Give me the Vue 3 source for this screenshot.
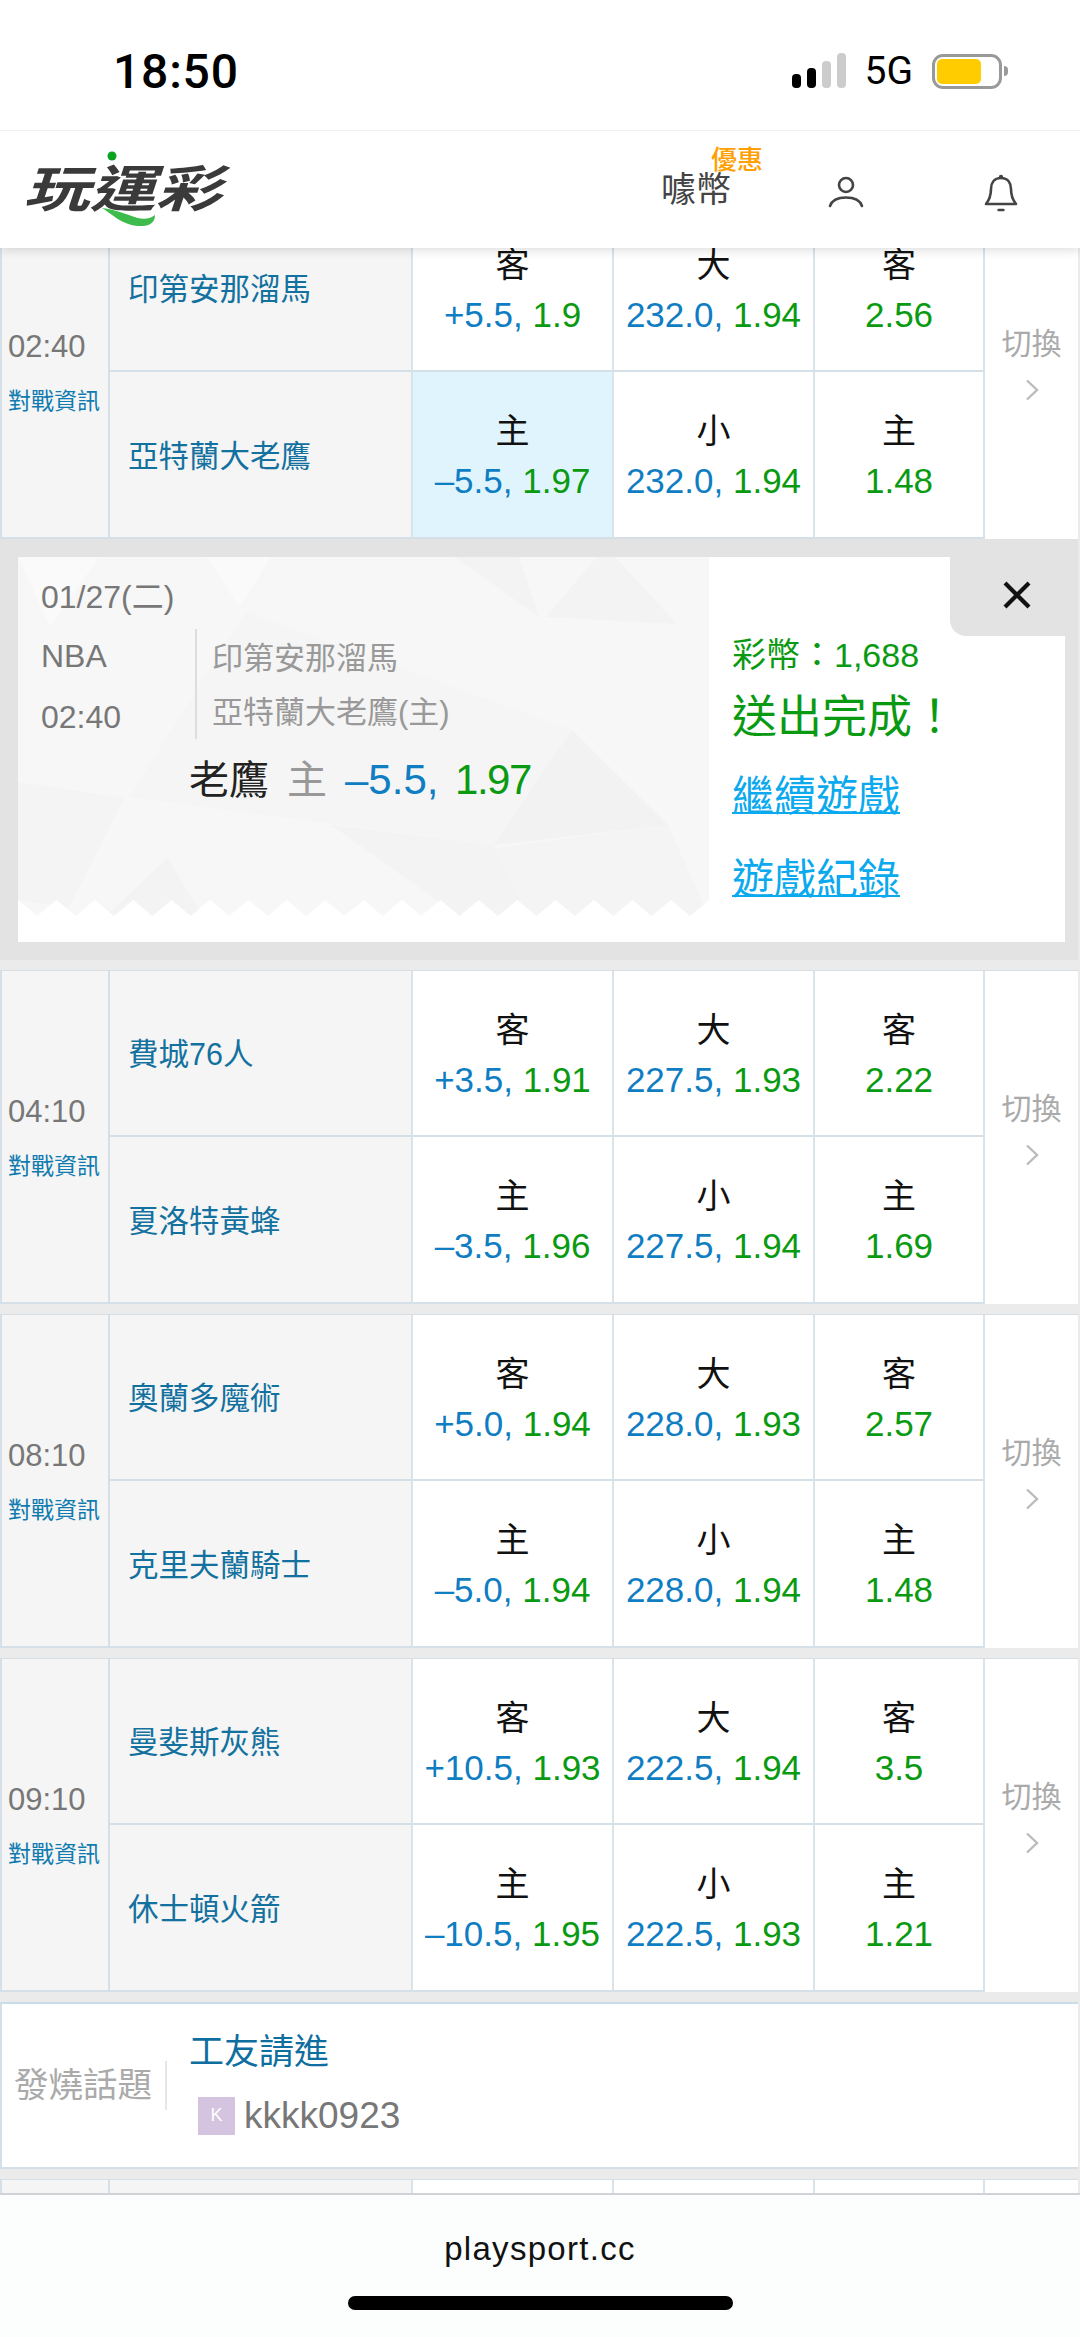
<template>
  <div class="phone">
    <header class="top">
      <div class="status">
        <span class="status__time">18:50</span>
        <div class="status__right">
          <svg class="status__signal" width="54" height="36" viewBox="0 0 54 36" aria-hidden="true">
            <rect x="0" y="21" width="9" height="14" rx="4" fill="#000" />
            <rect x="15" y="15" width="9" height="20" rx="4" fill="#000" />
            <rect x="30" y="8" width="9" height="27" rx="4" fill="#ccc" />
            <rect x="45" y="0" width="9" height="35" rx="4" fill="#ccc" />
          </svg>
          <span class="status__net">5G</span>
          <div class="battery">
            <span class="battery__level"></span>
          </div>
        </div>
      </div>
      <nav class="nav">
        <a class="logo">
          <span class="logo__text">玩運彩</span>
          <svg class="logo__mark" width="80" height="80" viewBox="0 0 80 80" aria-hidden="true">
            <circle cx="34" cy="8" r="4.5" fill="#0aa31e" />
            <path d="M24 60c10 6 20 17 36 18 10 .6 17-2 17-11-8 6-16 4-26 0-9-3-18-6-27-7z" fill="#3dbb4c" />
          </svg>
        </a>
        <div class="nav__right">
          <a class="nav__coin">
            <span class="nav__promo">優惠</span>
            噱幣
          </a>
          <svg class="nav__icon nav__user" width="36" height="32" viewBox="0 0 36 32" fill="none" stroke="#444" stroke-width="2.6" aria-hidden="true">
            <circle cx="18" cy="9" r="7" />
            <path d="M2 30c2-6 8-8.500 16-8.500S32 24 34 30" stroke-linecap="round" />
          </svg>
          <svg class="nav__icon nav__bell" width="36" height="38" viewBox="0 0 36 38" fill="none" stroke="#444" stroke-width="2.6" aria-hidden="true">
            <path d="M18 4c-7 0-10 5-10 11 0 6-1 10-5 15h30c-4-5-5-9-5-15 0-6-3-11-10-11z" stroke-linejoin="round" />
            <circle cx="18" cy="3" r="1.4" fill="#444" stroke-width="1.5" />
            <path d="M15.500 36h5" stroke-width="2.4" stroke-linecap="round" />
          </svg>
        </div>
      </nav>
    </header>

    <main class="scroller">
      <div class="list">
        <template v-for="(m, i) in matches" :key="i">
          <section class="match">
            <div class="match__time">
              <span class="match__clock">{{ m.time }}</span>
              <a class="match__info">對戰資訊</a>
            </div>
            <template v-for="(row, r) in m.rows" :key="r">
              <div class="team">{{ row.team }}</div>
              <div class="odds" :class="{ 'is-picked': row.picked }">
                <span class="odds__label">{{ r === 0 ? '客' : '主' }}</span>
                <span class="odds__value"><em class="blue">{{ row.spread }},</em> <em class="green">{{ row.spreadOdds }}</em></span>
              </div>
              <div class="odds">
                <span class="odds__label">{{ r === 0 ? '大' : '小' }}</span>
                <span class="odds__value"><em class="blue">{{ row.total }},</em> <em class="green">{{ row.totalOdds }}</em></span>
              </div>
              <div class="odds">
                <span class="odds__label">{{ r === 0 ? '客' : '主' }}</span>
                <span class="odds__value"><em class="green">{{ row.win }}</em></span>
              </div>
              <div v-if="r === 0" class="switch">
                <span>切換</span>
                <svg width="14" height="22" viewBox="0 0 14 22" fill="none" stroke="#bbb" stroke-width="2.4" aria-hidden="true">
                  <path d="M2 1.500 12 11 2 20.500" />
                </svg>
              </div>
            </template>
          </section>

          <section v-if="i === 0" class="result">
            <div class="ticket">
              <div class="ticket__left">
                <svg class="ticket__bg" width="691" height="359" viewBox="0 0 691 359" aria-hidden="true">
                  <polygon v-for="(p, k) in shards" :key="k" :points="p.points" :fill="p.fill" />
                  <polygon :points="teeth" fill="#fff" />
                </svg>
                <div class="ticket__date">01/27(二)</div>
                <div class="ticket__game">
                  <div class="ticket__meta">
                    <span>NBA</span>
                    <span>02:40</span>
                  </div>
                  <div class="ticket__teams">
                    <span>印第安那溜馬</span>
                    <span>亞特蘭大老鷹(主)</span>
                  </div>
                </div>
                <div class="ticket__pick">
                  <span class="ticket__name">老鷹</span>
                  <span class="ticket__side">主</span>
                  <span class="ticket__odds"><em class="blue">–5.5,</em> <em class="green">1.97</em></span>
                </div>
              </div>
              <div class="ticket__right">
                <div class="ticket__coins">彩幣：1,688</div>
                <div class="ticket__done">送出完成！</div>
                <a class="ticket__link">繼續遊戲</a>
                <a class="ticket__link">遊戲紀錄</a>
              </div>
              <button type="button" class="ticket__close" aria-label="關閉">
                <svg width="28" height="28" viewBox="0 0 28 28" fill="none" stroke="#111" stroke-width="4.2" aria-hidden="true">
                  <path d="M2 2 26 26M26 2 2 26" />
                </svg>
              </button>
            </div>
          </section>
        </template>

        <section class="hot">
          <div class="hot__label">發燒話題</div>
          <div class="hot__body">
            <a class="hot__title">工友請進</a>
            <div class="hot__user">
              <span class="hot__avatar">K</span>
              <span class="hot__name">kkkk0923</span>
            </div>
          </div>
        </section>

        <section class="match">
          <div class="match__time"></div>
          <div class="team"></div>
          <div class="odds"></div>
          <div class="odds"></div>
          <div class="odds"></div>
          <div class="switch"></div>
        </section>
      </div>
    </main>

    <footer class="browser">
      <span class="browser__url">playsport.cc</span>
      <span class="browser__home"></span>
    </footer>
  </div>
</template>

<script setup>
import { computed } from 'vue'

function row(team, spread, spreadOdds, total, totalOdds, win, picked = false) {
  return { team, spread, spreadOdds, total, totalOdds, win, picked }
}

const matches = [
  {
    time: '02:40',
    rows: [
      row('印第安那溜馬', '+5.5', '1.9', '232.0', '1.94', '2.56'),
      row('亞特蘭大老鷹', '–5.5', '1.97', '232.0', '1.94', '1.48', true),
    ],
  },
  {
    time: '04:10',
    rows: [
      row('費城76人', '+3.5', '1.91', '227.5', '1.93', '2.22'),
      row('夏洛特黃蜂', '–3.5', '1.96', '227.5', '1.94', '1.69'),
    ],
  },
  {
    time: '08:10',
    rows: [
      row('奧蘭多魔術', '+5.0', '1.94', '228.0', '1.93', '2.57'),
      row('克里夫蘭騎士', '–5.0', '1.94', '228.0', '1.94', '1.48'),
    ],
  },
  {
    time: '09:10',
    rows: [
      row('曼斐斯灰熊', '+10.5', '1.93', '222.5', '1.94', '3.5'),
      row('休士頓火箭', '–10.5', '1.95', '222.5', '1.93', '1.21'),
    ],
  },
]

// faint low-poly background of the ticket
const shards = [
  { points: '228,55 111,240 476,288 554,173', fill: '#f5f5f5' },
  { points: '437,0 521,60 501,0', fill: '#f3f3f3' },
  { points: '579,0 528,60 659,67 597,0', fill: '#f3f3f3' },
  { points: '554,173 476,288 650,268', fill: '#f2f2f2' },
  { points: '313,268 476,288 510,359 441,359', fill: '#f3f3f3' },
  { points: '0,225 106,241 51,350 0,343', fill: '#f4f4f4' },
  { points: '150,301 88,359 184,359', fill: '#f3f3f3' },
  { points: '650,268 476,291 510,359 691,359', fill: '#f4f4f4' },
  { points: '0,0 32,70 81,0', fill: '#fafafa' },
  { points: '189,0 221,50 253,0', fill: '#fafafa' },
]

const teeth = computed(() => {
  const pts = ['0,359', '0,343']
  for (let x = 19.2; x < 691; x += 38.4) {
    pts.push(`${x},359`, `${x + 19.2},343`)
  }
  pts.push('691,359')
  return pts.join(' ')
})
</script>

<style>
html, body {
  margin: 0;
  background: #fff;
}
</style>

<style scoped>
.phone {
  display: flex;
  flex-direction: column;
  height: 2337px;
  overflow: hidden;
  font-family: "Liberation Sans", "Noto Sans CJK TC", sans-serif;
  background: #fff;
}

em {
  font-style: normal;
}

.blue {
  color: #0f7dc2;
}

.green {
  color: #0a9a12;
}

.top {
  position: relative;
  z-index: 2;
  flex: none;
  background: #fff;
  box-shadow: 0 2px 10px rgba(0, 0, 0, 0.14);
}

.status {
  display: flex;
  align-items: center;
  justify-content: space-between;
  box-sizing: border-box;
  height: 131px;
  padding: 12px 78px 0 113px;
  border-bottom: 1px solid #edf2f6;
}

.status__time {
  font-family: Roboto, "Liberation Sans", sans-serif;
  font-size: 48px;
  font-weight: 500;
  letter-spacing: 0.8px;
  color: #000;
}

.status__right {
  display: flex;
  align-items: center;
  gap: 19px;
}

.status__net {
  font-family: Roboto, "Liberation Sans", sans-serif;
  font-size: 39px;
  font-weight: 400;
  color: #000;
}

.battery {
  position: relative;
  box-sizing: border-box;
  width: 70px;
  height: 35px;
  padding: 2px;
  border: 3px solid #999;
  border-radius: 11px;
}

.battery::after {
  content: "";
  position: absolute;
  top: 9px;
  right: -9px;
  width: 4px;
  height: 10px;
  border-radius: 0 5px 5px 0;
  background: #999;
}

.battery__level {
  display: block;
  width: 44px;
  height: 25px;
  border-radius: 5px;
  background: #ffcc00;
}

.nav {
  display: flex;
  align-items: center;
  justify-content: space-between;
  box-sizing: border-box;
  height: 117px;
  padding: 0 61px 0 29px;
}

.logo {
  position: relative;
  display: block;
  width: 198px;
  height: 50px;
}

.logo__text {
  display: inline-block;
  font-size: 50px;
  font-weight: 700;
  line-height: 50px;
  color: #3a3a3a;
  white-space: nowrap;
  transform: scaleX(1.32) skewX(-14deg);
  transform-origin: left center;
}

.logo__mark {
  position: absolute;
  top: -17px;
  left: 49px;
}

.nav__right {
  display: flex;
  align-items: flex-start;
  align-self: flex-start;
}

.nav__coin {
  position: relative;
  margin-top: 39px;
  font-size: 35px;
  line-height: 40px;
  color: #444;
}

.nav__promo {
  position: absolute;
  top: -24px;
  left: 50px;
  font-size: 26px;
  line-height: 28px;
  font-weight: 500;
  color: #ffa000;
  white-space: nowrap;
}

.nav__icon {
  display: block;
}

.nav__user {
  margin: 45px 0 0 97px;
}

.nav__bell {
  margin: 43px 0 0 119px;
}

.scroller {
  flex: 1;
  min-height: 0;
  overflow: hidden;
  background: #ebebeb;
}

.list {
  display: flex;
  flex-direction: column;
  gap: 10px;
  width: 1078px;
  margin-top: -43px;
  padding-bottom: 40px;
  background: #ebebeb;
}

.match {
  display: grid;
  grid-template-columns: 108px 303px 201px 201px 170px 93px;
  grid-template-rows: 166px 167px;
  flex: none;
  box-sizing: border-box;
  border-top: 1px solid #d4dfe8;
  border-left: 2px solid #d4dfe8;
  background: #fff;
}

.match__time {
  grid-row: 1 / span 2;
  display: flex;
  flex-direction: column;
  justify-content: center;
  gap: 24px;
  box-sizing: border-box;
  padding: 3px 0 0 6px;
  border-right: 2px solid #d4dfe8;
  border-bottom: 2px solid #d4dfe8;
  background: #f5f5f5;
}

.match__clock {
  font-size: 31px;
  line-height: 32px;
  color: #777;
}

.match__info {
  font-size: 23px;
  line-height: 28px;
  color: #0f7bb0;
  white-space: nowrap;
}

.team {
  display: flex;
  align-items: center;
  box-sizing: border-box;
  padding: 0 0 2px 18px;
  border-right: 2px solid #d9e3ea;
  border-bottom: 2px solid #d4dfe8;
  background: #f5f5f5;
  font-size: 30.5px;
  color: #13719f;
  white-space: nowrap;
}

.odds {
  display: flex;
  flex-direction: column;
  align-items: center;
  justify-content: center;
  box-sizing: border-box;
  padding-top: 3px;
  border-right: 2px solid #d9e3ea;
  border-bottom: 2px solid #d4dfe8;
}

.odds.is-picked {
  background: #e0f4fd;
}

.odds__label {
  font-size: 34px;
  line-height: 50px;
  color: #111;
}

.odds__value {
  font-size: 35px;
  line-height: 50px;
  white-space: nowrap;
}

.switch {
  grid-column: 6;
  grid-row: 1 / span 2;
  display: flex;
  flex-direction: column;
  align-items: center;
  justify-content: center;
  gap: 17px;
  padding-bottom: 18px;
  font-size: 30px;
  line-height: 36px;
  color: #aaa;
}

.result {
  flex: none;
  box-sizing: border-box;
  height: 421px;
  margin-top: -10px;
  padding: 18px 13px 18px 18px;
  background: #e3e3e3;
}

.ticket {
  position: relative;
  display: flex;
  height: 385px;
  background: #fff;
}

.ticket__left {
  position: relative;
  flex: none;
  box-sizing: border-box;
  width: 691px;
  height: 359px;
  padding: 20px 0 0 23px;
  background: #f7f7f7;
}

.ticket__bg {
  position: absolute;
  top: 0;
  left: 0;
}

.ticket__date,
.ticket__game,
.ticket__pick {
  position: relative;
}

.ticket__date {
  font-size: 32px;
  line-height: 40px;
  color: #777;
}

.ticket__game {
  display: flex;
  margin-top: 12px;
}

.ticket__meta {
  display: flex;
  flex-direction: column;
  gap: 26px;
  width: 154px;
  padding-top: 10px;
  font-size: 32px;
  line-height: 35px;
  color: #777;
}

.ticket__teams {
  display: flex;
  flex-direction: column;
  gap: 16px;
  height: 110px;
  box-sizing: border-box;
  padding: 11px 0 0 15px;
  border-left: 2px solid #ddd;
  font-size: 31px;
  line-height: 38px;
  color: #999;
}

.ticket__pick {
  display: flex;
  align-items: baseline;
  margin: 16px 0 0 148px;
  font-size: 40px;
  line-height: 50px;
}

.ticket__name {
  color: #222;
}

.ticket__side {
  margin-left: 18px;
  color: #999;
}

.ticket__odds {
  margin-left: 18px;
  font-size: 42px;
  white-space: nowrap;
}

.ticket__odds .green {
  margin-left: 5px;
  letter-spacing: -1.5px;
}

.ticket__right {
  flex: 1;
  padding: 78px 0 0 23px;
}

.ticket__coins {
  font-size: 34px;
  line-height: 40px;
  color: #0a9a12;
}

.ticket__done {
  margin-top: 13px;
  font-size: 45px;
  line-height: 60px;
  color: #0a9a12;
}

.ticket__link {
  display: block;
  width: max-content;
  margin-top: 19px;
  font-size: 42px;
  line-height: 60px;
  color: #0ba9ee;
  text-decoration: underline;
  text-decoration-thickness: 2px;
}

.ticket__link + .ticket__link {
  margin-top: 23px;
}

.ticket__close {
  position: absolute;
  top: 0;
  right: 0;
  display: flex;
  align-items: center;
  justify-content: center;
  width: 115px;
  height: 79px;
  padding: 0 0 4px 18px;
  border: 0;
  border-bottom-left-radius: 16px;
  background: #e3e3e3;
}

.hot {
  display: flex;
  align-items: center;
  flex: none;
  box-sizing: border-box;
  height: 167px;
  border-top: 2px solid #c8dde8;
  border-bottom: 2px solid #d4dfe8;
  border-left: 2px solid #d4dfe8;
  background: #fff;
}

.hot__label {
  box-sizing: border-box;
  width: 165px;
  height: 49px;
  padding-left: 12px;
  border-right: 2px solid #e6e6e6;
  font-size: 34.5px;
  line-height: 49px;
  color: #aaa;
  white-space: nowrap;
}

.hot__body {
  display: flex;
  flex-direction: column;
  gap: 21px;
  margin-top: -9px;
  padding-left: 22px;
}

.hot__title {
  font-size: 35px;
  line-height: 48px;
  color: #0f6ea0;
}

.hot__user {
  display: flex;
  align-items: center;
  gap: 9px;
  padding-left: 9px;
}

.hot__avatar {
  display: flex;
  align-items: center;
  justify-content: center;
  width: 37px;
  height: 38px;
  background: #d5c4e0;
  font-size: 18px;
  color: #fff;
}

.hot__name {
  font-size: 37px;
  line-height: 38px;
  color: #777;
}

.browser {
  position: relative;
  z-index: 2;
  display: flex;
  flex-direction: column;
  align-items: center;
  flex: none;
  box-sizing: border-box;
  height: 144px;
  padding-top: 34px;
  border-top: 2px solid #d0d3d6;
  background: #fcfdfd;
}

.browser__url {
  font-size: 33px;
  line-height: 40px;
  letter-spacing: 1.3px;
  color: #111;
}

.browser__home {
  width: 385px;
  height: 14px;
  margin-top: 27px;
  border-radius: 7px;
  background: #000;
}
</style>
